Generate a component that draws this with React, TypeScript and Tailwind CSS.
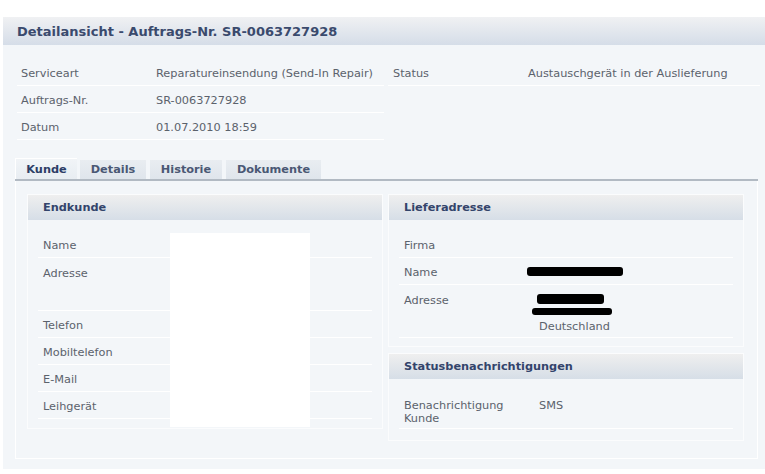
import React from "react";

const font = { fontFamily: '"DejaVu Sans", Verdana, sans-serif' };

function TopRow({ l1, v1, l2, v2, full }: { l1: string; v1: string; l2?: string; v2?: string; full?: boolean }) {
  return (
    <div className="flex h-[27px] items-center">
      <div className="flex h-full w-[367px] items-center border-b border-white pt-[4px]">
        <div className="w-[139px] pl-[4px]">{l1}</div>
        <div className="flex-1">{v1}</div>
      </div>
      <div className={"ml-[4px] flex h-full flex-1 items-center pt-[4px] " + (full ? "border-b border-white" : "")}>
        <div className="w-[140px] pl-[5px]">{l2}</div>
        <div className="flex-1">{v2}</div>
      </div>
    </div>
  );
}

function Row({ label, children, h = "h-[27px]", top }: { label: React.ReactNode; children?: React.ReactNode; h?: string; top?: boolean }) {
  return (
    <div className={"mx-[10px] flex border-b border-white pl-[5px] " + h + (top ? " items-start pt-[9px] leading-[13px]" : " items-center pt-[4px]")}>
      <div className="w-[135px] shrink-0">{label}</div>
      <div className="flex-1">{children}</div>
    </div>
  );
}

function Panel({ title, children, className = "" }: { title: string; children: React.ReactNode; className?: string }) {
  return (
    <div className={"relative border border-[#fbfcfd] bg-[#f3f6f9] " + className}>
      <div className="flex h-[25px] items-center bg-gradient-to-b from-[#efefef] to-[#d6dee7] pl-[15px] pt-[2px] font-bold text-[#33446b]">
        {title}
      </div>
      <div className="pt-[11px] pb-[10px]">{children}</div>
    </div>
  );
}

function Blob({ w, h, ml = 0 }: { w: number; h: number; ml?: number }) {
  return <div className="rounded-[3px] bg-black" style={{ width: w, height: h, marginLeft: ml }} />;
}

export default function App() {
  return (
    <div className="h-[474px] w-[765px] bg-white text-[11.3px] text-[#5b626c]" style={font}>
      <div className="pt-[17px] pl-[3px]">
        <div className="flex h-[28px] items-center bg-gradient-to-b from-[#f0f1f3] to-[#d5dde8] pl-[14px] pt-[2px] text-[13px] font-bold text-[#3a4a6d]">
          Detailansicht - Auftrags-Nr. SR-0063727928
        </div>
        <div className="h-[424px] bg-[#f3f6f9] pt-[14px]">
          <div className="ml-[14px] mr-[5px]">
            <TopRow l1="Serviceart" v1="Reparatureinsendung (Send-In Repair)" l2="Status" v2="Austauschgerät in der Auslieferung" full />
            <TopRow l1="Auftrags-Nr." v1="SR-0063727928" />
            <TopRow l1="Datum" v1="01.07.2010 18:59" />
          </div>

          <div className="ml-[12px] mt-[18px] w-[743px]">
            <div className="flex items-end gap-[3px] border-b-2 border-[#b2bac3] font-bold">
              <div className="flex h-[21px] w-[62px] items-center justify-center border-t border-l border-white bg-gradient-to-b from-[#f1f4f7] to-[#e8edf2] pt-[2px] text-[#2d3e66]">
                Kunde
              </div>
              <div className="flex h-[19px] w-[66px] items-center justify-center bg-gradient-to-b from-[#e9edf1] to-[#dfe5ec] pt-[2px] text-[#4a5874]">
                Details
              </div>
              <div className="ml-[1px] flex h-[19px] w-[72px] items-center justify-center bg-gradient-to-b from-[#e9edf1] to-[#dfe5ec] pt-[2px] text-[#4a5874]">
                Historie
              </div>
              <div className="ml-[1px] flex h-[19px] w-[95px] items-center justify-center bg-gradient-to-b from-[#e9edf1] to-[#dfe5ec] pt-[2px] text-[#4a5874]">
                Dokumente
              </div>
            </div>
            <div className="flex h-[278px] gap-[5px] border-x border-b border-white px-[11px] pt-[13px]">
              <Panel title="Endkunde" className="h-[235px] w-[356px]">
                <Row label="Name" />
                <Row label="Adresse" h="h-[53px]" top />
                <Row label="Telefon" />
                <Row label="Mobiltelefon" />
                <Row label="E-Mail" />
                <Row label="Leihgerät" />
                <div className="absolute left-[142px] top-[38px] h-[194px] w-[140px] bg-white" />
              </Panel>
              <div className="flex w-[356px] flex-col gap-[6px]">
                <Panel title="Lieferadresse" className="h-[153px]">
                  <Row label="Firma" />
                  <Row label="Name">
                    <div className="-ml-[12px] mt-[-4px]">
                      <Blob w={96} h={9} />
                    </div>
                  </Row>
                  <Row label="Adresse" h="h-[53px]" top>
                    <div className="-mt-[2px] flex flex-col">
                      <div className="flex h-[13px] items-center">
                        <Blob w={67} h={10} ml={-2} />
                      </div>
                      <div className="flex h-[13px] items-center">
                        <Blob w={80} h={7} ml={-7} />
                      </div>
                      <div className="mt-[2px] h-[13px]">Deutschland</div>
                    </div>
                  </Row>
                </Panel>
                <Panel title="Statusbenachrichtigungen" className="h-[88px]">
                  <Row label={<span className="block w-[110px]">Benachrichtigung Kunde</span>} h="h-[39px]" top>
                    SMS
                  </Row>
                </Panel>
              </div>
            </div>
          </div>
        </div>
      </div>
    </div>
  );
}
